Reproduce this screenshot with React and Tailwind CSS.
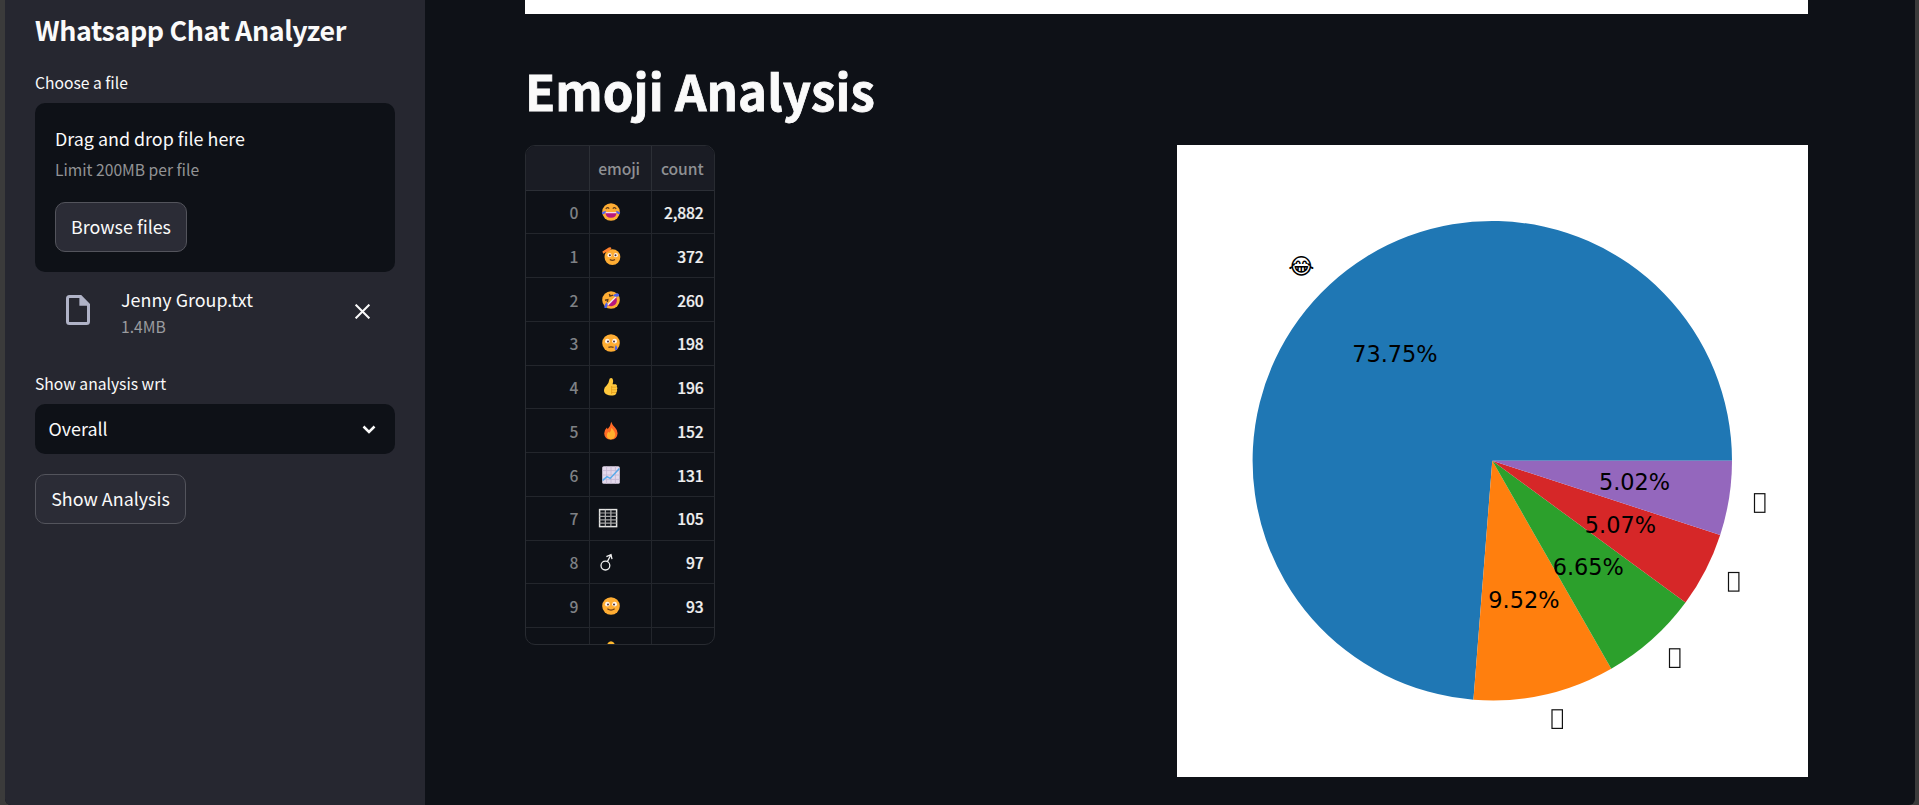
import React from "react";

const SLICES = [
  { count: 2882, color: "#1f77b4" },
  { count: 372, color: "#ff7f0e" },
  { count: 260, color: "#2ca02c" },
  { count: 198, color: "#d62728" },
  { count: 196, color: "#9467bd" },
];

const ORANGE = "#ffad33";

function Joy() {
  return (
    <svg viewBox="0 0 18 18" className="h-[18px] w-[18px] overflow-visible">
      <circle cx="9" cy="9" r="8.8" fill={ORANGE} />
      <path d="M3.8 5.9Q5.4 3.5 7.2 5.6M10.8 5.6Q12.6 3.5 14.2 5.9" fill="none" stroke="#5c3a1e" strokeWidth="1.2" />
      <path d="M3.4 9.3H14.6Q14.3 14.8 9 14.8Q3.7 14.8 3.4 9.3Z" fill="#b8177e" />
      <path d="M3.4 9H14.6L14.2 10.2H3.8Z" fill="#f4dcee" />
      <path d="M4 7.8Q3.6 10.4 1.8 11.2Q-.4 11.4-.2 9.6Q1.3 8.4 4 7.8ZM14 7.8Q14.4 10.4 16.2 11.2Q18.4 11.4 18.2 9.6Q16.7 8.4 14 7.8Z" fill="#5064e8" />
    </svg>
  );
}

function Salute() {
  return (
    <svg viewBox="0 0 18 18" className="h-[18px] w-[18px] overflow-visible">
      <circle cx="10.4" cy="10.1" r="7.9" fill={ORANGE} />
      <circle cx="7.5" cy="8.2" r="2.1" fill="#fff3e6" />
      <circle cx="13.8" cy="8.2" r="2.1" fill="#fff3e6" />
      <circle cx="7.9" cy="8.2" r="1" fill="#4a2a2a" />
      <circle cx="13.5" cy="8.2" r="1" fill="#4a2a2a" />
      <path d="M7.8 12.6Q10.4 14.2 13 12.6" fill="none" stroke="#6b3d18" strokeWidth="1.2" />
      <path d="M1.2 6.8L.4 4.4L6.8.4Q9.2-.4 9.4 1.4L7 4.4L3.4 5.4Z" fill="#ff822d" />
    </svg>
  );
}

function Rofl() {
  return (
    <svg viewBox="0 0 18 18" className="h-[18px] w-[18px] overflow-visible">
      <circle cx="9" cy="9" r="8.8" fill={ORANGE} />
      <path d="M5.8 14.2L14.2 6Q16.2 11 13 13.8Q9.6 16.4 5.8 14.2Z" fill="#b8177e" />
      <path d="M5.2 13.4L13.4 5.4L14.4 6.3L6.3 14.4Z" fill="#f4e8f4" />
      <path d="M3 9.2L5.8 8.6L5.4 11M7.4 3L8 5.2L11 4.2" fill="none" stroke="#5c3a1e" strokeWidth="1.4" />
      <path d="M10.8 4.8Q12.8 2 15.6 2.2Q17.6 2.8 17 5Q15.2 6.4 10.8 4.8ZM5 11Q6.4 14.4 5 16.4Q3.4 17.8 2.2 16.2Q2 13.2 5 11Z" fill="#5064e8" />
    </svg>
  );
}

function Cry({ tear = true }) {
  return (
    <svg viewBox="0 0 18 18" className="h-[18px] w-[18px] overflow-visible">
      <circle cx="9" cy="9" r="8.8" fill={ORANGE} />
      <circle cx="5.4" cy="7.2" r="2.4" fill="#fff3e6" />
      <circle cx="12.6" cy="7.2" r="2.4" fill="#fff3e6" />
      <circle cx="6" cy="7.5" r="1" fill="#4a3040" />
      <circle cx="12" cy="7.5" r="1" fill="#4a3040" />
      {tear ? (
        <>
          <path d="M6.4 13.4Q9 12.2 11.6 13.4" fill="none" stroke="#6b3d18" strokeWidth="1.2" />
          <path d="M13.9 11Q16 14 15 15.4Q13.9 16.6 12.8 15.4Q12.2 13.8 13.9 11Z" fill="#5064e8" />
        </>
      ) : (
        <path d="M5.4 11.8Q9 14.4 12.6 11.8" fill="none" stroke="#6b3d18" strokeWidth="1.2" />
      )}
    </svg>
  );
}

function Smile() {
  return <Cry tear={false} />;
}

function Thumb() {
  return (
    <svg viewBox="0 0 18 18" className="h-[18px] w-[18px] overflow-visible">
      <path d="M7.6.8Q9.2-.6 10.6.8Q11.8 2.6 10.6 6.2H13.8Q15.6 6.8 14.8 8.8Q16 10 15 11.6Q15.6 13.2 14.4 14.2Q14.6 16 13 17Q8 18.4 4.8 16.6Q1.8 15.4 2 12Q2.2 9.4 4.4 7.8Q7 5 7.6.8Z" fill="#ffc83d" />
      <path d="M9.4 9.2H14.6M9.4 11.8H14.8M9.4 14.4H14.2M9.6 8V16" fill="none" stroke="#e39a1c" strokeWidth=".8" />
    </svg>
  );
}

function Fist() {
  return (
    <svg viewBox="0 0 18 18" className="h-[18px] w-[18px] overflow-visible">
      <path d="M5.6 2.4Q6.4.6 9 .2Q11.6.6 12.4 2.4L14.6 8Q15 17 9 17.6Q3 17 3.4 8Z" fill="#ffb82e" />
    </svg>
  );
}

function Fire() {
  return (
    <svg viewBox="0 0 18 18" className="h-[18px] w-[18px] overflow-visible">
      <path d="M9.2-.2Q10 2.6 13 5.4Q15.6 8 15.6 11.2Q15.2 17.4 8.8 17.6Q2.6 17.4 2.2 11.4Q2.2 8 5 5.6L5.6 7.2Q8.6 4.4 9.2-.2Z" fill="#ff6a26" />
      <path d="M9.4 5.8Q13.4 9.6 13.2 13Q12.6 17.2 8.8 17.4Q5 17.2 4.8 13.2Q5 10.8 6.6 9.8L7.4 10.8Q9.2 8.8 9.4 5.8Z" fill="#ffb02e" />
    </svg>
  );
}

function ChartUp() {
  return (
    <svg viewBox="0 0 18 18" className="h-[18px] w-[18px] overflow-visible">
      <rect x=".2" y=".2" width="17.6" height="17.6" rx="1.6" fill="#e3d9ec" />
      <path d="M4.6.2V17.8M9 .2V17.8M13.4.2V17.8M.2 4.6H17.8M.2 9H17.8M.2 13.4H17.8" stroke="#c4b6d0" strokeWidth=".8" />
      <path d="M.6 14.4L5 10.6L8.2 12.4L17.4 2.6" fill="none" stroke="#55a9ea" strokeWidth="1.5" />
    </svg>
  );
}

function Swatch() {
  return (
    <svg viewBox="0 0 18 18" className="-ml-[3px] h-[18px] w-[18px] overflow-visible">
      <rect x=".6" y=".6" width="17" height="17" fill="none" stroke="#e4e4e2" strokeWidth="1.5" />
      <path d="M6.3.6V17.6M11.9.6V17.6" stroke="#c4c4c4" strokeWidth="1.1" />
      <path d="M.6 4H17.6M.6 7.4H17.6M.6 10.8H17.6M.6 14.2H17.6" stroke="#a6a6a6" strokeWidth="1.2" />
    </svg>
  );
}

function Male() {
  return (
    <svg viewBox="0 0 18 18" className="-ml-[3px] h-[18px] w-[18px] overflow-visible">
      <circle cx="6.4" cy="12.6" r="4.4" fill="none" stroke="#f0f0f0" strokeWidth="1.3" />
      <path d="M8.4 8.6L11.8 2M7.4 3.6L12 1.6L13 6.2" fill="none" stroke="#f0f0f0" strokeWidth="1.3" />
    </svg>
  );
}

const ROWS = [
  ["0", Joy, "2,882"],
  ["1", Salute, "372"],
  ["2", Rofl, "260"],
  ["3", Cry, "198"],
  ["4", Thumb, "196"],
  ["5", Fire, "152"],
  ["6", ChartUp, "131"],
  ["7", Swatch, "105"],
  ["8", Male, "97"],
  ["9", Smile, "93"],
  ["", Fist, ""],
];

function EmojiTable() {
  return (
    <div className="h-[500px] w-[190px] overflow-hidden rounded-[10px] border border-[#282b31] text-[15.67px] font-medium leading-[25px]">
      <div className="grid h-[44.5px] grid-cols-[63.5px_62.5px_1fr] border-b border-[#2c2f36] bg-[#1a1c24] text-[#8f9093]">
        <div className="border-r border-[#2c2f36]" />
        <div className="flex items-center justify-end border-r border-[#2c2f36] pr-[11px] pt-[1.5px] tracking-[-0.1px]">emoji</div>
        <div className="flex items-center justify-end pr-[10.5px] pt-[1.5px] tracking-[-0.1px]">count</div>
      </div>
      {ROWS.map(([index, Icon, count], i) => (
        <div key={i} className="grid h-[43.75px] grid-cols-[63.5px_62.5px_1fr] border-b border-[#23262c]">
          <div className="flex items-center justify-end border-r border-[#23262c] pr-[10px] pt-[1.5px] text-[#7f8185]">{index}</div>
          <div className="flex items-center border-r border-[#23262c] pl-[12.5px] pt-[0.5px]">
            <Icon />
          </div>
          <div className="flex items-center justify-end pr-[10.5px] pt-[1.5px] tracking-[-0.15px] text-[#f0f0f1] [-webkit-text-stroke:0.2px_#f0f0f1]">{count}</div>
        </div>
      ))}
    </div>
  );
}

const CX = 315.3;
const CY = 315.7;
const R = 239.7;

function PieChart() {
  const total = SLICES.reduce((sum, s) => sum + s.count, 0);
  let start = 0;
  const wedges = SLICES.map((s) => {
    const sweep = (s.count / total) * 2 * Math.PI;
    const end = start + sweep;
    const mid = start + sweep / 2;
    const at = (a, r) => [CX + r * Math.cos(a), CY - r * Math.sin(a)];
    const [x0, y0] = at(start, R);
    const [x1, y1] = at(end, R);
    const [tx, ty] = at(mid, R * 0.6);
    start = end;
    return {
      color: s.color,
      d: `M${CX} ${CY}L${x0} ${y0}A${R} ${R} 0 ${sweep > Math.PI ? 1 : 0} 0 ${x1} ${y1}Z`,
      tx,
      ty,
      label: `${((s.count / total) * 100).toFixed(2)}%`,
    };
  });
  const boxes = [
    [577.5, 348.7],
    [551.5, 427.5],
    [492.5, 503.8],
    [375, 564.8],
  ];
  return (
    <svg viewBox="0 0 631 632" className="h-[632px] w-[631px] bg-white">
      {wedges.map((w) => (
        <path key={w.color} d={w.d} fill={w.color} />
      ))}
      <g fontFamily="'DejaVu Sans', sans-serif" fontSize="22.4" fill="#000">
        {wedges.map((w) => (
          <text key={w.color} x={w.tx + 0.2} y={w.ty + 6.8} textAnchor="middle">
            {w.label}
          </text>
        ))}
        <text x="137.3" y="128.9" textAnchor="end">😂</text>
      </g>
      {boxes.map(([x, y]) => (
        <rect key={x} x={x} y={y} width="10.4" height="18.6" fill="none" stroke="#111" strokeWidth="1.2" />
      ))}
    </svg>
  );
}

function Sidebar() {
  return (
    <aside className="flex w-[420px] flex-col items-start bg-[#262730] px-[30px] pt-[12px]">
      <h1 className="h-[36px] whitespace-nowrap text-[26.85px] font-semibold leading-[36px] tracking-[-0.38px]">Whatsapp Chat Analyzer</h1>
      <div className="mt-[22px] text-[15.67px] leading-[25px]">Choose a file</div>
      <div className="mt-[8px] flex h-[169px] w-[360px] flex-col items-start rounded-[10px] bg-[#0e1117] p-[20px]">
        <div className="text-[17.9px] leading-[30px]">Drag and drop file here</div>
        <div className="mt-[4px] text-[15.67px] leading-[25px] text-[#929395]">Limit 200MB per file</div>
        <button className="mt-[20px] h-[50px] w-[132px] shrink-0 rounded-[10px] border border-[#53545c] bg-[#2b2c36] pb-[2px] text-[17.9px] leading-[30px]">
          Browse files
        </button>
      </div>
      <div className="mt-[13px] flex w-[360px] items-start">
        <svg viewBox="0 0 24 30" className="ml-[31px] mt-[10px] h-[30px] w-[24px]">
          <path d="M3.5 1.5H14.6L22.5 9.6V26.5Q22.5 28.5 20.5 28.5H3.5Q1.5 28.5 1.5 26.5V3.5Q1.5 1.5 3.5 1.5Z" fill="none" stroke="#b0b3c7" strokeWidth="3" />
          <path d="M13.4 1.5V10.8H23Z" fill="#b0b3c7" />
        </svg>
        <div className="ml-[31px] flex-1">
          <div className="text-[17.9px] leading-[28px]">Jenny Group.txt</div>
          <div className="mt-px text-[15.67px] leading-[25px] text-[#9a9b9f]">1.4MB</div>
        </div>
        <svg viewBox="0 0 14 14" className="mr-[25px] mt-[19px] h-[15px] w-[15px]">
          <path d="M.6.6L13.4 13.4M13.4.6L.6 13.4" fill="none" stroke="#fafafa" strokeWidth="1.9" />
        </svg>
      </div>
      <div className="mt-[32px] text-[15.67px] leading-[25px]">Show analysis wrt</div>
      <div className="mt-[8px] flex h-[50px] w-[360px] items-center justify-between rounded-[10px] bg-[#0e1117] pl-[13.5px] pr-[19px] text-[17.9px] leading-[30px]">
        <span className="pb-[2px]">Overall</span>
        <svg viewBox="0 0 14 9" className="h-[9px] w-[14px]">
          <path d="M1.5 1.5L7 7L12.5 1.5" fill="none" stroke="#fafafa" strokeWidth="2.5" />
        </svg>
      </div>
      <button className="mt-[20px] h-[50px] w-[151px] rounded-[10px] border border-[#53545c] bg-[#2b2c36] pb-[2px] text-[17.9px] leading-[30px]">
        Show Analysis
      </button>
    </aside>
  );
}

export default function App() {
  return (
    <div className="h-[805px] w-[1919px] overflow-hidden bg-[#3b3b3b] pl-[5px] pr-[4px] font-['Noto_Sans_CJK_JP',sans-serif] text-[#fafafa]">
      <div className="flex h-full overflow-hidden rounded-b-[6px] bg-[#0e1117]">
        <Sidebar />
        <main className="flex-1 pl-[100px]">
          <div className="h-[14px] w-[1283px] bg-white" />
          <h2 className="mt-[43px] h-[66px] whitespace-nowrap text-[49.2px] font-bold leading-[66px] tracking-[0.05px] [-webkit-text-stroke:0.8px_#fafafa]">Emoji Analysis</h2>
          <div className="mt-[22px] flex w-[1283px] items-start justify-between">
            <EmojiTable />
            <PieChart />
          </div>
        </main>
      </div>
    </div>
  );
}
